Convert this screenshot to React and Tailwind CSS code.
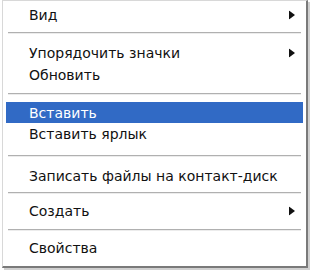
import React from 'react';

const Arrow = () => (
  <svg width="6" height="9" viewBox="0 0 6 9" className="absolute right-[8px] top-1/2 -translate-y-1/2">
    <path d="M0 0 L6 4.5 L0 9 Z" fill="#111" />
  </svg>
);

const Item = ({ label, h, sub, active }) => (
  <div
    className={`relative flex items-center pl-[23px] mx-[3px] ${active ? 'bg-[#316ac5] text-white' : 'text-[#111]'}`}
    style={{ height: h }}
  >
    {label}
    {sub && <Arrow />}
  </div>
);

const Sep = ({ h, at }) => (
  <div className="mx-[5px]" style={{ height: h, paddingTop: at }}>
    <div className="h-px bg-[#b0b0b0]" />
    <div className="h-px bg-[#ececec]" />
  </div>
);

export default function App() {
  return (
    <div className="w-[315px] h-[274px] bg-white">
      <div
        className="ml-[2px] w-[306px] h-[268px] bg-white border-l border-t border-[#d8d8d8] border-r-2 border-b-2 border-r-[#7a7a7a] border-b-[#7a7a7a] pt-[3px] text-[14px] leading-none shadow-[2px_2px_0_#d0d0d0]"
        style={{ fontFamily: '"DejaVu Sans", Verdana, sans-serif' }}
      >
        <Item label="Вид" h={22} sub />
        <Sep h={15} at={6} />
        <Item label="Упорядочить значки" h={23} sub />
        <Item label="Обновить" h={22} />
        <Sep h={16} at={7} />
        <Item label="Вставить" h={21} active />
        <Item label="Вставить ярлык" h={22} />
        <Sep h={20} at={10} />
        <Item label="Записать файлы на контакт-диск" h={22} />
        <Sep h={13} at={5} />
        <Item label="Создать" h={22} sub />
        <Sep h={14} at={7} />
        <Item label="Свойства" h={23} />
      </div>
    </div>
  );
}
